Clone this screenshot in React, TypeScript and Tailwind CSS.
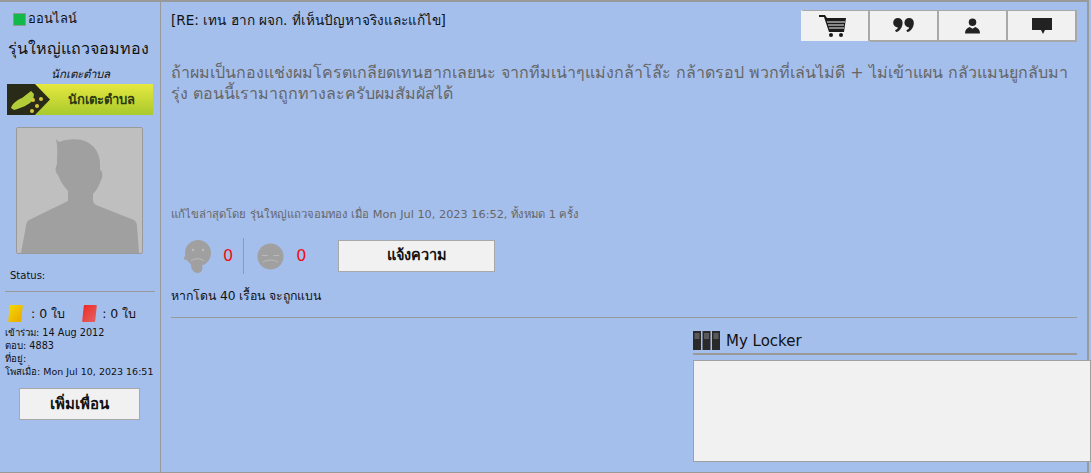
import React from "react";

const font = "font-['DejaVu_Sans','Noto_Sans',sans-serif]";

function Avatar() {
  return (
    <div className="mt-[12px] ml-[16px] h-[127px] w-[127px] overflow-hidden rounded-[2px] border border-[#9a9a9a] bg-[#bfbfbf]">
      <svg viewBox="0 0 125 125" className="block h-full w-full">
        <path fill="#a0a0a0" d="M39 11l3 3C50 11 62 10 70 14C78 18 83 26 83 36v6C85 42 86 46 85 50C83 54 82 60 76 66v6C76 74 77 76 79 77L117 92Q120 94 120 98L122 125H4L9 98Q9 94 12 92L51 73V63C46 58 43 52 41 47C38 44 38 40 40 36C40 28 41 20 39 11z" />
      </svg>
    </div>
  );
}

function Badge() {
  return (
    <div className="mt-[3px] ml-[7px] flex h-[31px] w-[146px] items-center overflow-hidden bg-gradient-to-b from-[#e6e840] to-[#a9c92c]">
      <svg viewBox="0 0 44 31" className="h-[31px] w-[44px] shrink-0">
        <path fill="#2a2a18" d="M0 0h28l15 15.5L28 31H0z" />
        <path fill="#b3cc3a" d="M4 24c1-4 6-8 11-10l9-7 3 3-1 6c-4 5-12 8-19 10z" />
        <circle cx="26" cy="16" r="2" fill="#d8c63a" />
        <circle cx="34" cy="15" r="2" fill="#d8c63a" />
        <circle cx="30" cy="22" r="2" fill="#d8c63a" />
        <circle cx="25" cy="27" r="2" fill="#d8c63a" />
      </svg>
      <span className="ml-[17px] text-[13px] font-bold leading-none text-[#2b3a10]">นักเตะตำบล</span>
    </div>
  );
}

function Card({ color }: { color: string }) {
  return <span className={`inline-block h-[17px] w-[13px] -skew-x-6 rounded-[1px] ${color}`} />;
}

function IconBtn({ children, first }: { children: React.ReactNode; first?: boolean }) {
  return (
    <div className={`flex w-[69px] items-center justify-center border-2 border-l-0 border-t border-[#a8a8a8] bg-[#f1f1f1] ${first ? "h-[31px] border-b-0 border-l-2 border-l-[#f1f1f1]" : "h-[32px]"}`}>
      {children}
    </div>
  );
}

export default function App() {
  return (
    <div className={`${font} h-[473px] w-[1091px] overflow-hidden bg-[#a5bfed] text-[#111]`}>
      <div className="flex h-[473px] w-[1089px] border-b border-r-2 border-t-2 border-[#999]">
        <aside className="w-[161px] shrink-0 border-r border-[#999]">
          <div className="mt-[10px] ml-[14px] flex items-center gap-[3px] text-[13px] leading-[14px]">
            <span className="h-[11px] w-[11px] bg-[#12b84a] outline-1 outline-[#8a9a9a]" />
            <span>ออนไลน์</span>
          </div>
          <div className="mt-[13px] ml-[8px] whitespace-nowrap text-[16px] leading-[20px]">รุ่นใหญ่แถวจอมทอง</div>
          <div className="mt-[8px] ml-[51px] text-[11.5px] italic leading-[14px]">นักเตะตำบล</div>
          <Badge />
          <Avatar />
          <div className="mt-[15px] ml-[10px] text-[10px] leading-[14px]">Status:</div>
          <div className="mx-[5px] mt-[8px] h-px w-[150px] bg-[#999]" />
          <div className="mt-[13px] ml-[9px] flex items-center text-[12.5px] leading-[16px]">
            <Card color="bg-gradient-to-br from-[#f5d800] to-[#e8a800]" />
            <span className="ml-[9px]">: 0 ใบ</span>
            <span className="ml-[18px] flex items-center">
              <Card color="bg-gradient-to-br from-[#f02020] to-[#e06060]" />
            </span>
            <span className="ml-[6px]">: 0 ใบ</span>
          </div>
          <div className="mt-[4px] ml-[5px] text-[9.7px] leading-[13px]">
            <div>เข้าร่วม: 14 Aug 2012</div>
            <div>ตอบ: 4883</div>
            <div>ที่อยู่:</div>
            <div className="whitespace-nowrap text-[9.5px]">โพสเมื่อ: Mon Jul 10, 2023 16:51</div>
          </div>
          <div className="mt-[10px] ml-[19px] flex h-[32px] w-[121px] items-center justify-center border border-[#a8a8a8] bg-[#f1f1f1] text-[15px] font-bold">เพิ่มเพื่อน</div>
        </aside>

        <main className="min-w-0 flex-1 pl-[10px]">
          <div className="flex items-start justify-between pr-[10px]">
            <h1 className="mt-[8px] text-[13.6px] font-normal leading-[20px]">[RE: เทน ฮาก ผจก. ที่เห็นปัญหาจริงและแก้ไข]</h1>
            <div className="mt-[8px] flex">
              <IconBtn first>
                <svg viewBox="0 0 28 24" className="-ml-[5px] h-[24px] w-[28px]"><path fill="#1a1a1a" d="M0 1h6l2 3h19l-2 14H10L5 3H0z" /><circle cx="12" cy="21" r="2" fill="#1a1a1a" /><circle cx="22" cy="21" r="2" fill="#1a1a1a" /><path stroke="#f1f1f1" strokeWidth="1.2" d="M8 8h18M9 11h16M10 14h15" /></svg>
              </IconBtn>
              <IconBtn>
                <svg viewBox="0 0 22 16" className="h-[15px] w-[21px]"><path fill="#222" d="M5 0a5 5 0 0 1 5 5c0 5-3 9-7 10l-1-2c2-1 3-2 3-3a5 5 0 0 1 0-10zM17 0a5 5 0 0 1 5 5c0 5-3 9-7 10l-1-2c2-1 3-2 3-3a5 5 0 0 1 0-10z" /></svg>
              </IconBtn>
              <IconBtn>
                <svg viewBox="0 0 16 16" className="h-[16px] w-[15px]"><circle cx="8" cy="4" r="4" fill="#222" /><path fill="#222" d="M0 16c0-4 2-6 5-7l3 2 3-2c3 1 5 3 5 7z" /></svg>
              </IconBtn>
              <IconBtn>
                <svg viewBox="0 0 20 16" className="h-[16px] w-[20px]"><path fill="#222" d="M0 0h20v12h-7l-2 4-2-4H0z" /></svg>
              </IconBtn>
            </div>
          </div>

          <div className="mt-[20px] h-[100px] pr-[8px] text-[16px] leading-[21px] text-[#666]">
            <div className="whitespace-nowrap">ถ้าผมเป็นกองแช่งผมโครตเกลียดเทนฮากเลยนะ จากทีมเน่าๆแม่งกล้าโล๊ะ กล้าดรอป พวกที่เล่นไม่ดี + ไม่เข้าแผน กลัวแมนยูกลับมา</div>
            <div>รุ่ง ตอนนี้เรามาถูกทางละครับผมสัมผัสได้</div>
          </div>

          <div className="mt-[46px] text-[11.3px] leading-[14px] text-[#666]">แก้ไขล่าสุดโดย รุ่นใหญ่แถวจอมทอง เมื่อ Mon Jul 10, 2023 16:52, ทั้งหมด 1 ครั้ง</div>

          <div className="mt-[16px] ml-[10px] flex h-[36px] items-center">
            <svg viewBox="0 0 32 36" className="h-[36px] w-[32px]">
              <circle cx="17" cy="15" r="13" fill="#a0a0a0" />
              <path fill="#a0a0a0" d="M10 24c-1 6 2 11 7 11 4 0 5-4 4-8l-3-3z" />
              <circle cx="5" cy="20" r="2" fill="#a0a0a0" />
              <circle cx="12" cy="12" r="1.2" fill="#bbb" /><circle cx="22" cy="12" r="1.2" fill="#bbb" />
              <path stroke="#bbb" fill="none" d="M10 23c3-3 10-3 13 0" />
            </svg>
            <span className="ml-[10px] text-[16px] text-[#f01010]">0</span>
            <span className="ml-[10px] h-[36px] w-px bg-[#999]" />
            <svg viewBox="0 0 28 28" className="ml-[13px] h-[27px] w-[27px]">
              <circle cx="14" cy="14" r="13.5" fill="#a0a0a0" />
              <path stroke="#bbb" fill="none" strokeWidth="1" d="M5 13h6M17 13h6M6 20c4-3 12-3 16 0" />
            </svg>
            <span className="ml-[12px] text-[16px] text-[#f01010]">0</span>
            <div className="ml-[32px] flex h-[32px] w-[157px] items-center justify-center border border-[#a8a8a8] bg-[#f1f1f1] text-[14.5px] font-bold">แจ้งความ</div>
          </div>

          <div className="mt-[15px] whitespace-nowrap text-[12.3px] leading-[14px]">หากโดน 40 เรื้อน จะถูกแบน</div>
          <div className="mt-[14px] mr-[10px] h-px bg-[#999]" />

          <div className="ml-[522px] mt-[12px] w-[384px]">
            <div className="flex h-[25px] items-center gap-[6px] border-b-2 border-[#999] pb-[2px]">
              <svg viewBox="0 0 27 19" className="h-[19px] w-[27px]">
                <g fill="#2a2a2a"><rect x="0" width="8" height="19" /><rect x="9.5" width="8" height="19" /><rect x="19" width="8" height="19" /></g>
                <g stroke="#888"><path d="M1.5 3h5M1.5 5h5M1.5 7h5M11 3h5M11 5h5M11 7h5M20.5 3h5M20.5 5h5M20.5 7h5" /></g>
              </svg>
              <span className="text-[15px] leading-[20px]">My Locker</span>
            </div>
            <div className="mt-[5px] h-[102px] w-[398px] border border-[#a0a0a0] bg-[#f1f1f1]" />
          </div>
        </main>
      </div>
    </div>
  );
}
